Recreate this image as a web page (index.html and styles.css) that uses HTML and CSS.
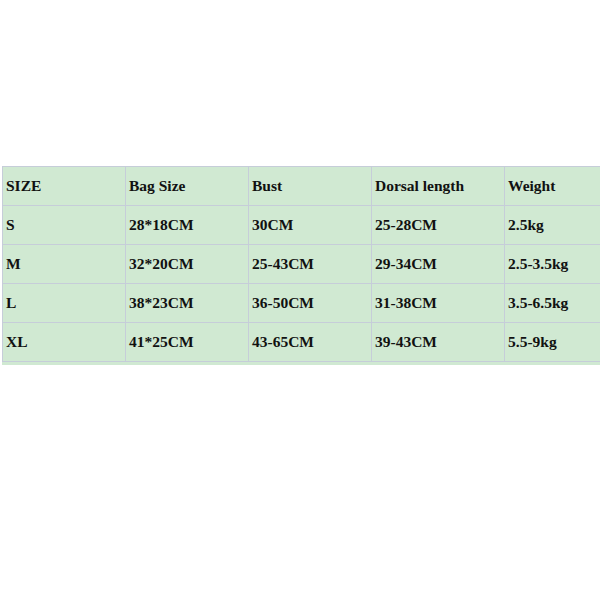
FILE: index.html
```html
<!DOCTYPE html>
<html>
<head>
<meta charset="utf-8">
<link rel="stylesheet" href="styles.css">
</head>
<body>
<div class="wrap">
<table class="size-table">
<colgroup>
<col class="c1"><col class="c2"><col class="c3"><col class="c4"><col class="c5">
</colgroup>
<tr><td>SIZE</td><td>Bag Size</td><td>Bust</td><td>Dorsal length</td><td>Weight</td></tr>
<tr><td>S</td><td>28*18CM</td><td>30CM</td><td>25-28CM</td><td>2.5kg</td></tr>
<tr><td>M</td><td>32*20CM</td><td>25-43CM</td><td>29-34CM</td><td>2.5-3.5kg</td></tr>
<tr><td>L</td><td>38*23CM</td><td>36-50CM</td><td>31-38CM</td><td>3.5-6.5kg</td></tr>
<tr><td>XL</td><td>41*25CM</td><td>43-65CM</td><td>39-43CM</td><td>5.5-9kg</td></tr>
</table>
</div>
</body>
</html>
```
FILE: styles.css
```css
html, body {
  margin: 0;
  padding: 0;
  background: #ffffff;
  overflow: hidden;
}
.wrap {
  margin-top: 166px;
  margin-left: 2px;
  width: 598px;
  overflow: hidden;
  background: #d0e9d2;
  padding-bottom: 3px;
}
.size-table {
  border-collapse: collapse;
  table-layout: fixed;
  width: 620px;
  background: #d0e9d2;
  font-family: "Liberation Serif", "Times New Roman", serif;
  font-weight: bold;
  font-size: 15.5px;
  color: #111111;
}
.c1 { width: 123px; }
.c2 { width: 123px; }
.c3 { width: 123px; }
.c4 { width: 133px; }
.c5 { width: 118px; }
.size-table td {
  border: 1px solid #c6cdd9;
  height: 38px;
  padding: 0 3px;
  vertical-align: middle;
  white-space: nowrap;
}
```
